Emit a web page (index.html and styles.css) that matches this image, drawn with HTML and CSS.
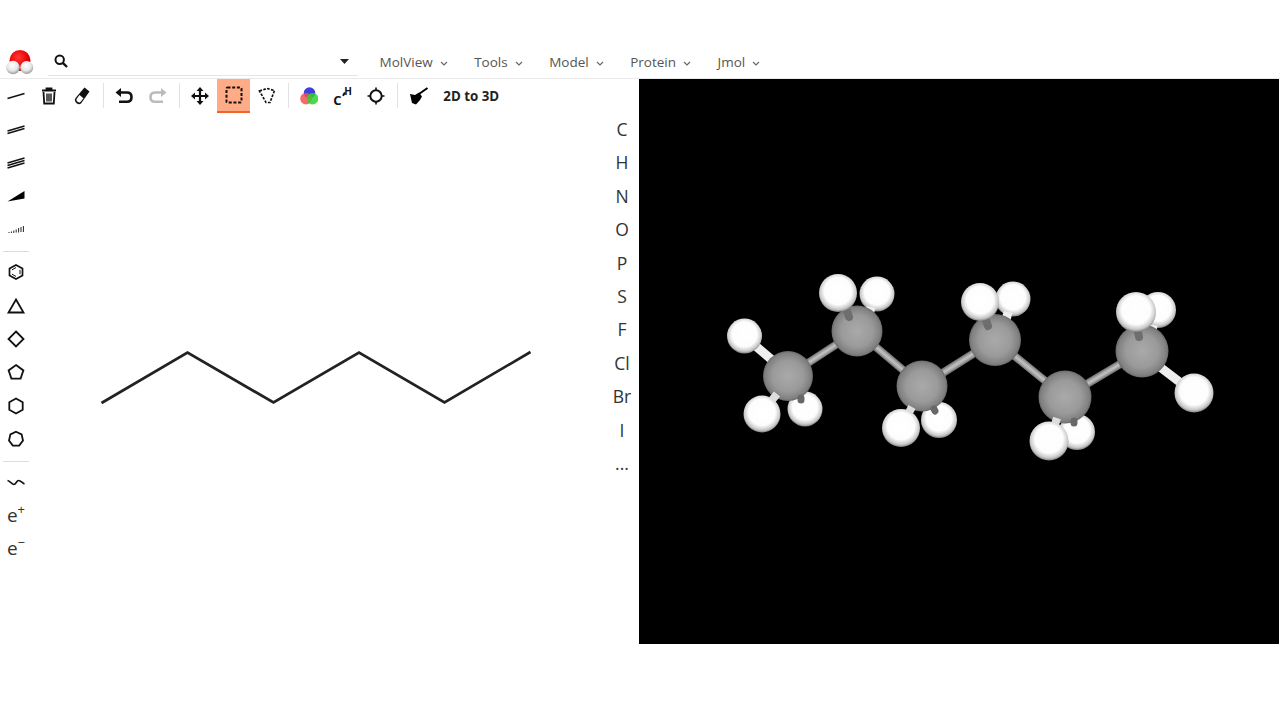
FILE: index.html
```html
<!DOCTYPE html>
<html lang="en">
<head>
    <meta charset="UTF-8">
    <title>MolView</title>
    <link rel="stylesheet" href="styles.css">
</head>
<body>
    <!-- Menu bar -->
    <div class="menubar">
        <svg class="logo" width="32" height="32" viewBox="0 0 32 32">
            <defs>
                <radialGradient id="logoRed" cx="42%" cy="35%" r="65%"><stop offset="0" stop-color="#ff3a3a"/><stop offset="0.7" stop-color="#e80000"/><stop offset="1" stop-color="#b00000"/></radialGradient>
                <radialGradient id="logoWhite" cx="45%" cy="35%" r="70%"><stop offset="0" stop-color="#fff"/><stop offset="0.55" stop-color="#e8e8e8"/><stop offset="1" stop-color="#8c8c8c"/></radialGradient>
            </defs>
            <circle cx="17" cy="14.5" r="10.5" fill="url(#logoRed)"/>
            <circle cx="10" cy="21.5" r="6.8" fill="url(#logoWhite)"/>
            <circle cx="23.7" cy="21.5" r="6.5" fill="url(#logoWhite)"/>
        </svg>
        <div class="search">
            <svg width="14" height="14" viewBox="0 0 14 14"><circle cx="5.7" cy="5.7" r="4.2" fill="none" stroke="#111" stroke-width="2"/><path d="M8.8 8.8 L13 13" stroke="#111" stroke-width="2.4"/></svg>
            <svg width="9" height="5" viewBox="0 0 9 5"><path d="M0 0H9L4.5 5Z" fill="#222"/></svg>
        </div>
        <ul class="menu">
            <li>MolView<svg class="chev" width="8" height="5" viewBox="0 0 8 5"><path d="M1 1 L4 4 L7 1" fill="none" stroke="#666" stroke-width="1.2"/></svg></li>
            <li>Tools<svg class="chev" width="8" height="5" viewBox="0 0 8 5"><path d="M1 1 L4 4 L7 1" fill="none" stroke="#666" stroke-width="1.2"/></svg></li>
            <li>Model<svg class="chev" width="8" height="5" viewBox="0 0 8 5"><path d="M1 1 L4 4 L7 1" fill="none" stroke="#666" stroke-width="1.2"/></svg></li>
            <li>Protein<svg class="chev" width="8" height="5" viewBox="0 0 8 5"><path d="M1 1 L4 4 L7 1" fill="none" stroke="#666" stroke-width="1.2"/></svg></li>
            <li>Jmol<svg class="chev" width="8" height="5" viewBox="0 0 8 5"><path d="M1 1 L4 4 L7 1" fill="none" stroke="#666" stroke-width="1.2"/></svg></li>
        </ul>
    </div>

    <div class="main">
        <!-- Sketcher -->
        <div class="sketcher">
            <div class="left-tools">
                <div class="tool"><svg width="20" height="20" viewBox="0 0 20 20"><path d="M1.5 12.5 L18.5 7.5" stroke="#111" stroke-width="1.5"/></svg></div>
                <div class="tool"><svg width="20" height="20" viewBox="0 0 20 20"><path d="M1.5 12 L18.5 7 M1.5 14.5 L18.5 9.5" stroke="#111" stroke-width="1.5"/></svg></div>
                <div class="tool"><svg width="20" height="20" viewBox="0 0 20 20"><path d="M1.5 11 L18.5 6 M1.5 13.5 L18.5 8.5 M1.5 16 L18.5 11" stroke="#111" stroke-width="1.4"/></svg></div>
                <div class="tool"><svg width="20" height="20" viewBox="0 0 20 20"><path d="M1.5 15.5 L18.5 5 V12.5 Z" fill="#000"/></svg></div>
                <div class="tool"><svg width="20" height="20" viewBox="0 0 20 20"><path d="M3 13V14 M5.4 12.5V14 M7.800 11.500V14 M10.200 10.500V13.500 M12.600 9V13.500 M15 8V13 M17.400 7V13" stroke="#222" stroke-width="1"/></svg></div>
                <div class="sep-h"></div>
                <div class="tool"><svg width="20" height="20" viewBox="0 0 20 20"><path d="M10 3 L16.5 6.5 V13.5 L10 17 L3.5 13.5 V6.5 Z" fill="none" stroke="#111" stroke-width="1.7"/><path d="M6 7.8 L10 5.6 M6 12.2 L10 14.4 M14 7.8 V12.2" stroke="#111" stroke-width="1"/></svg></div>
                <div class="tool"><svg width="20" height="20" viewBox="0 0 20 20"><path d="M10 3.5 L17.5 16.5 H2.5 Z" fill="none" stroke="#111" stroke-width="1.8"/></svg></div>
                <div class="tool"><svg width="20" height="20" viewBox="0 0 20 20"><path d="M10 2.5 L17.5 10 L10 17.5 L2.5 10 Z" fill="none" stroke="#111" stroke-width="1.8"/></svg></div>
                <div class="tool"><svg width="20" height="20" viewBox="0 0 20 20"><path d="M10 3 L17.4 8.4 L14.6 16.6 H5.4 L2.6 8.4 Z" fill="none" stroke="#111" stroke-width="1.8"/></svg></div>
                <div class="tool"><svg width="20" height="20" viewBox="0 0 20 20"><path d="M10 2.5 L16.7 6.2 V13.8 L10 17.5 L3.3 13.8 V6.2 Z" fill="none" stroke="#111" stroke-width="1.8"/></svg></div>
                <div class="tool"><svg width="20" height="20" viewBox="0 0 20 20"><path d="M10 2.7 L15.6 5.4 L17 11.6 L13.2 16.6 H6.8 L3 11.6 L4.4 5.4 Z" fill="none" stroke="#111" stroke-width="1.8"/></svg></div>
                <div class="sep-h"></div>
                <div class="tool"><svg width="20" height="20" viewBox="0 0 20 20"><path d="M1.5 8.5 C4 9 6 12.5 8 12.5 C10 12.5 10.5 8.5 12.5 8.5 C15 8.5 16 11 18.5 12" fill="none" stroke="#111" stroke-width="1.6"/></svg></div>
                <div class="tool tool-text">e<sup>+</sup></div>
                <div class="tool tool-text">e<sup>&minus;</sup></div>
            </div>

            <div class="center">
                <div class="toolbar">
                    <!-- trash -->
                    <div class="btn"><svg width="18" height="18" viewBox="0 0 18 18"><path d="M2 3.5H16 M6.5 3.5 V1.5 H11.5 V3.5" fill="none" stroke="#111" stroke-width="1.8"/><path d="M3.5 5 L4.2 16.5 H13.8 L14.5 5" fill="none" stroke="#111" stroke-width="1.8"/><path d="M7 6.5V14.5 M9 6.5V14.5 M11 6.5V14.5" stroke="#111" stroke-width="1.4"/></svg></div>
                    <!-- eraser -->
                    <div class="btn"><svg width="18" height="18" viewBox="0 0 18 18"><path d="M11.5 0.5 L16.5 4.5 L8 16.5 Q6 17.8 4 16.5 L2.5 15 Q1 13 2.5 11 Z" fill="#111"/><path d="M6.5 8 L10.5 11.2 L7.2 15.2 Q6 15.8 4.8 15 L3.8 14 Q3 13 3.7 11.7 Z" fill="#fff"/></svg></div>
                    <div class="sep-v"></div>
                    <!-- undo / redo -->
                    <div class="btn"><svg width="18" height="16" viewBox="0 0 18 16"><path d="M2 4.5 H12 Q16.5 4.5 16.5 9 Q16.5 13.8 12 13.8 H4" fill="none" stroke="#111" stroke-width="2.6"/><path d="M6 0 V9 L0.5 4.5 Z" fill="#111"/></svg></div>
                    <div class="btn"><svg width="18" height="16" viewBox="0 0 18 16"><path d="M16 4.5 H6 Q1.5 4.5 1.5 9 Q1.5 13.8 6 13.8 H14" fill="none" stroke="#bbb" stroke-width="2.6"/><path d="M12 0 V9 L17.5 4.5 Z" fill="#bbb"/></svg></div>
                    <div class="sep-v"></div>
                    <!-- move -->
                    <div class="btn"><svg width="18" height="18" viewBox="0 0 18 18"><path d="M9 2V16 M2 9H16" stroke="#111" stroke-width="2.2"/><path d="M9 0 L12.5 4 H5.5 Z M9 18 L12.5 14 H5.5 Z M0 9 L4 5.5 V12.5 Z M18 9 L14 5.5 V12.5 Z" fill="#111"/></svg></div>
                    <!-- rect select -->
                    <div class="btn active"><svg width="18" height="18" viewBox="0 0 18 18"><rect x="1.5" y="1.5" width="15" height="15" rx="1" fill="none" stroke="#111" stroke-width="2" stroke-dasharray="3 1.7"/></svg></div>
                    <!-- lasso -->
                    <div class="btn"><svg width="18" height="18" viewBox="0 0 18 18"><path d="M1.5 4 L9 1.5 L16.5 3.5 L12 15.5 L8 15.5 Z" fill="none" stroke="#111" stroke-width="1.7" stroke-dasharray="2.6 1.4"/></svg></div>
                    <div class="sep-v"></div>
                    <!-- colours -->
                    <div class="btn"><svg width="18" height="18" viewBox="0 0 18 18"><circle cx="9.5" cy="6" r="5.8" fill="#4040d8"/><circle cx="6" cy="11.7" r="5.8" fill="#f25050" fill-opacity="0.85"/><circle cx="12.5" cy="11.7" r="5.8" fill="#30d030" fill-opacity="0.85"/></svg></div>
                    <!-- C-H -->
                    <div class="btn btn-ch"><span class="ch-c">C</span><span class="ch-dash"></span><span class="ch-h">H</span></div>
                    <!-- centre -->
                    <div class="btn"><svg width="18" height="18" viewBox="0 0 18 18"><circle cx="9" cy="9" r="5.7" fill="none" stroke="#111" stroke-width="2"/><path d="M9 0.5V4 M9 14V17.5 M0.5 9H4 M14 9H17.5" stroke="#111" stroke-width="1.6"/></svg></div>
                    <div class="sep-v"></div>
                    <!-- brush -->
                    <div class="btn"><svg width="20" height="18" viewBox="0 0 20 18"><path d="M1 7 L6 8 L10 5.5 L13 9.5 L11 13 L7 17.5 L3 16 Z" fill="#000"/><path d="M10 7 L18.5 1" stroke="#000" stroke-width="2"/></svg></div>
                    <div class="convert">2D to 3D</div>
                </div>

                <div class="canvas-row">
                    <svg class="sketch" width="573" height="531" viewBox="32 113 573 531">
                        <path d="M101.5 403 L187.5 352.5 L273.5 402.5 L359 352.5 L444.5 402.5 L530.5 352" fill="none" stroke="#222" stroke-width="2.7"/>
                    </svg>
                    <div class="elements">
                        <div class="el">C</div>
                        <div class="el">H</div>
                        <div class="el">N</div>
                        <div class="el">O</div>
                        <div class="el">P</div>
                        <div class="el">S</div>
                        <div class="el">F</div>
                        <div class="el">Cl</div>
                        <div class="el">Br</div>
                        <div class="el">I</div>
                        <div class="el">...</div>
                    </div>
                </div>
            </div>
        </div>

        <!-- 3D model -->
        <div class="viewer">
            <svg width="640" height="565" viewBox="639 79 640 565">
                <defs>
                    <radialGradient id="gc" cx="50%" cy="50%" r="52%"><stop offset="0" stop-color="#aaa"/><stop offset="0.6" stop-color="#9a9a9a"/><stop offset="0.88" stop-color="#808080"/><stop offset="1" stop-color="#5e5e5e"/></radialGradient>
                    <radialGradient id="gh" cx="50%" cy="45%" r="55%"><stop offset="0" stop-color="#fff"/><stop offset="0.65" stop-color="#fdfdfd"/><stop offset="0.88" stop-color="#c8c8c8"/><stop offset="1" stop-color="#808080"/></radialGradient>
                </defs>

                <!-- back hydrogens -->
                <circle cx="805" cy="409" r="17.5" fill="url(#gh)"/>
                <circle cx="877" cy="294" r="17.5" fill="url(#gh)"/>
                <circle cx="939" cy="420" r="18" fill="url(#gh)"/>
                <circle cx="1013" cy="299" r="17.5" fill="url(#gh)"/>
                <circle cx="1077" cy="432" r="18" fill="url(#gh)"/>
                <circle cx="1158" cy="310" r="18" fill="url(#gh)"/>

                <!-- bonds -->
                <path class="bond-cc" d="M788 376 L857 331 M857 331 L922 386 M922 386 L995 340 M995 340 L1065 397 M1065 397 L1142 351"/>
                <path class="bond-cc-mid" d="M788 376 L857 331 M857 331 L922 386 M922 386 L995 340 M995 340 L1065 397 M1065 397 L1142 351"/>
                <path class="bond-cc-hi" d="M788 376 L857 331 M857 331 L922 386 M922 386 L995 340 M995 340 L1065 397 M1065 397 L1142 351"/>
                <path class="bond-h" d="M744 336 L772 360 M1194 393 L1160 367 M871 307 L869 315 M1008 312 L1006 320 M1153 325 L1152 332"/>

                <!-- carbons -->
                <circle cx="788" cy="376" r="25" fill="url(#gc)"/>
                <circle cx="857" cy="331" r="25.5" fill="url(#gc)"/>
                <circle cx="922" cy="386" r="25.5" fill="url(#gc)"/>
                <circle cx="995" cy="340" r="26" fill="url(#gc)"/>
                <circle cx="1065" cy="397" r="26.5" fill="url(#gc)"/>
                <circle cx="1142" cy="351" r="26.5" fill="url(#gc)"/>

                <!-- stubs over the carbons -->
                <path class="stub-back" d="M801 398 L801 400 M934 409 L935 411 M1074 421 L1074 423"/>
                <path class="stub-top" d="M849 317 L846 308 M988 326 L985 318 M1139 337 L1137 328"/>
                <path class="stub-front" d="M777 394 L768 405 M912 407 L906 418 M1057 418 L1053 431"/>

                <!-- front hydrogens -->
                <circle cx="744.5" cy="336" r="17.5" fill="url(#gh)"/>
                <circle cx="762" cy="414" r="18.5" fill="url(#gh)"/>
                <circle cx="838" cy="293" r="19" fill="url(#gh)"/>
                <circle cx="901" cy="428" r="19" fill="url(#gh)"/>
                <circle cx="980" cy="302" r="19" fill="url(#gh)"/>
                <circle cx="1049" cy="441" r="19.5" fill="url(#gh)"/>
                <circle cx="1136" cy="312" r="20" fill="url(#gh)"/>
                <circle cx="1194" cy="393" r="19.5" fill="url(#gh)"/>
            </svg>
        </div>
    </div>
</body>
</html>
```

FILE: styles.css
```css
body {
    font-family: "Open Sans", sans-serif;
    margin: 0;
    padding: 0;
    background-color: #fff;
    color: #333;
}

/* Menu bar */
.menubar {
    display: flex;
    align-items: center;
    height: 33px;
    margin-top: 45px;
    border-bottom: 1px solid #eaeaea;
}

.logo {
    display: block;
    margin-left: 3px;
    flex: none;
}

.search {
    display: flex;
    align-items: center;
    justify-content: space-between;
    width: 310px;
    height: 29px;
    margin-left: 13px;
    padding: 0 9px 0 6px;
    box-sizing: border-box;
    border-bottom: 1px solid #e6e6e6;
    flex: none;
}

.menu {
    display: flex;
    list-style: none;
    margin: 0 0 0 21.5px;
    padding: 0;
    font-size: 13.5px;
    color: #555;
}

.menu li {
    margin-right: 26.5px;
    white-space: nowrap;
}

.chev {
    margin-left: 7px;
    vertical-align: 1px;
}

/* Main area */
.main {
    display: flex;
}

.sketcher {
    display: flex;
    width: 639px;
    flex: none;
}

.left-tools {
    width: 32px;
    flex: none;
}

.tool {
    display: flex;
    align-items: center;
    justify-content: center;
    height: 33.4px;
}

.tool-text {
    font-size: 19px;
    color: #333;
    line-height: 1;
}

.tool-text sup {
    font-size: 13px;
    line-height: 1;
    margin-bottom: 12px;
}

.sep-h {
    height: 1px;
    margin: 5px 3px 3.6px 3px;
    background: #ddd;
}

.center {
    flex: 1;
    display: flex;
    flex-direction: column;
}

.toolbar {
    display: flex;
    align-items: stretch;
    height: 34px;
}

.btn {
    display: flex;
    align-items: center;
    justify-content: center;
    width: 33.4px;
    height: 34px;
    box-sizing: border-box;
    flex: none;
}

.btn.active {
    background: #ffab85;
    border-bottom: 2px solid #f0642a;
}

.sep-v {
    width: 1px;
    height: 25px;
    margin: 4px 4px 0 4px;
    background: #e2e2e2;
    flex: none;
}

.btn-ch {
    position: relative;
    font-weight: 700;
    color: #111;
}

.ch-c {
    position: absolute;
    left: 7px;
    top: 15px;
    font-size: 13px;
    line-height: 1;
}

.ch-h {
    position: absolute;
    left: 18px;
    top: 7px;
    font-size: 10px;
    line-height: 1;
}

.ch-dash {
    position: absolute;
    left: 16.5px;
    top: 13px;
    width: 1.5px;
    height: 4px;
    background: #111;
    transform: rotate(30deg);
}

.convert {
    font-size: 13.3px;
    font-weight: 700;
    color: #222;
    line-height: 34px;
    margin-left: 8px;
    white-space: nowrap;
}

.canvas-row {
    display: flex;
    height: 531px;
}

.sketch {
    display: block;
    flex: none;
}

.elements {
    width: 34px;
    flex: none;
}

.el {
    height: 33.4px;
    line-height: 33.4px;
    text-align: center;
    font-size: 17.5px;
    color: #333;
}

/* 3D model */
.viewer {
    width: 640px;
    height: 565px;
    background: #000;
    flex: none;
}

.viewer svg {
    display: block;
}

.viewer path {
    fill: none;
}

.bond-cc {
    stroke: #7c7c7c;
    stroke-width: 8;
}

.bond-cc-mid {
    stroke: #a0a0a0;
    stroke-width: 5.5;
}

.bond-cc-hi {
    stroke: #bcbcbc;
    stroke-width: 2.5;
}

.bond-h {
    stroke: #eee;
    stroke-width: 9;
}

.stub-back {
    stroke: #686868;
    stroke-width: 7;
    stroke-linecap: round;
}

.stub-top {
    stroke: #6e6e6e;
    stroke-width: 8;
    stroke-linecap: round;
}

.stub-front {
    stroke: #ddd;
    stroke-width: 8;
}
```
